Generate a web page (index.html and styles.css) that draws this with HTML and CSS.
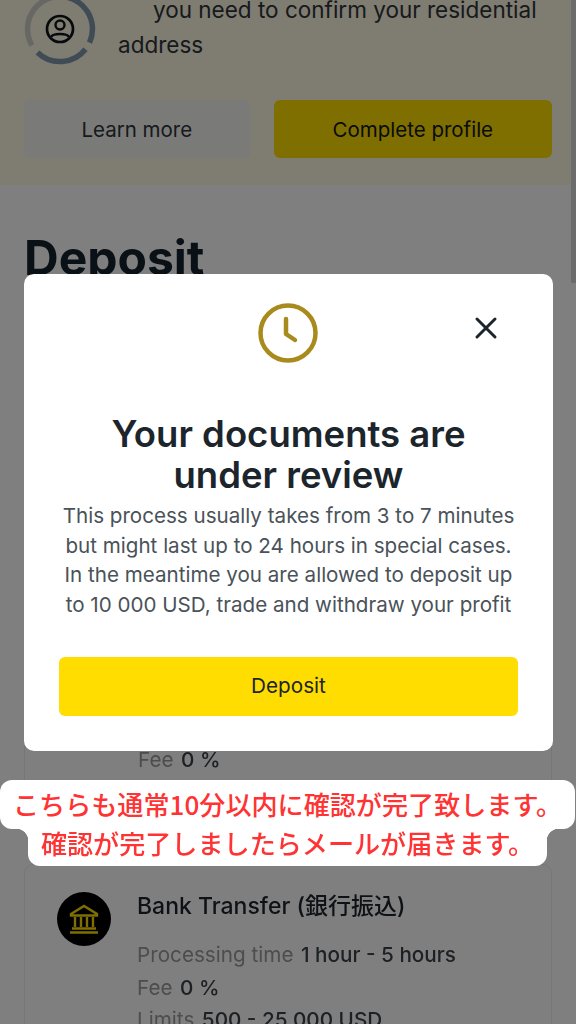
FILE: index.html
```html
<!DOCTYPE html>
<html lang="en">
<head>
  <meta charset="UTF-8">
  <meta name="viewport" content="width=device-width, initial-scale=1.0">
  <title>Deposit</title>
  <link rel="stylesheet" href="styles.css">
</head>
<body>
  <div class="page">
    <section class="notice">
      <div class="notice-row">
        <svg class="ring" width="72" height="72" viewBox="0 0 72 72" fill="none">
          <path d="M36 3.500A32.500 32.500 0 0 0 7.900 52.300" stroke="#cfcfc8" stroke-width="5.500"/>
          <path d="M36 3.500A32.500 32.500 0 0 1 65.500 49.600" stroke="#7f98ac" stroke-width="5.500"/>
          <path d="M13.500 59.500A32.500 32.500 0 0 0 61.500 56.200" stroke="#7f98ac" stroke-width="5.500"/>
          <circle cx="36" cy="36" r="13" stroke="#0c141a" stroke-width="2.700"/>
          <circle cx="36" cy="32" r="4.500" stroke="#0c141a" stroke-width="2.400"/>
          <path d="M27 44c2-4 16-4 18 0" stroke="#0c141a" stroke-width="2.400"/>
        </svg>
        <p class="notice-text">you need to confirm your residential address</p>
      </div>
      <div class="notice-btns">
        <button class="btn btn-grey">Learn more</button>
        <button class="btn btn-yellow">Complete profile</button>
      </div>
    </section>

    <section class="deposit">
      <h1>Deposit</h1>
      <div class="card card-first">
        <div class="card-info">
          <p class="line"><span class="muted">Fee</span> 0 %</p>
        </div>
      </div>
      <div class="card">
        <div class="bank-icon">
          <svg width="32" height="32" viewBox="0 0 32 32" fill="none" stroke="#ffdd00" stroke-width="2.400">
            <path d="M3 11 16 3l13 8v1.500H3z"/>
            <path d="M7 14v10M13 14v10M19 14v10M25 14v10"/>
            <path d="M4 25.500h24M2 29.500h28"/>
          </svg>
        </div>
        <div class="card-info">
          <h2>Bank Transfer (銀行振込)</h2>
          <p class="line"><span class="muted">Processing time</span> 1 hour - 5 hours</p>
          <p class="line"><span class="muted">Fee</span> 0 %</p>
          <p class="line"><span class="muted">Limits</span> 500 - 25 000 USD</p>
        </div>
      </div>
    </section>
  </div>

  <div class="scroll-thumb"></div>
  <div class="overlay"></div>

  <div class="modal">
    <svg class="clock" width="62" height="62" viewBox="0 0 62 62" fill="none" stroke="#a98a1c" stroke-linecap="round">
      <circle cx="31" cy="31" r="27.500" stroke-width="4.500"/>
      <path d="M29 17v15l9 6" stroke-width="4.500" stroke-linejoin="round"/>
    </svg>
    <svg class="close" width="24" height="24" viewBox="0 0 24 24" fill="none" stroke="#1c252c" stroke-width="3" stroke-linecap="round">
      <path d="M3 3l18 18M21 3 3 21"/>
    </svg>
    <h2 class="modal-title">Your documents are under review</h2>
    <p class="modal-text">This process usually takes from 3 to 7 minutes<br>but might last up to 24 hours in special cases.<br>In the meantime you are allowed to deposit up<br>to 10 000 USD, trade and withdraw your profit</p>
    <button class="btn modal-btn">Deposit</button>
  </div>

  <div class="caption">
    <span class="cap-one">こちらも通常10分以内に確認が完了致します。</span>
    <span class="cap-two">確認が完了しましたらメールが届きます。</span>
  </div>
</body>
</html>
```

FILE: styles.css
```css
* {
  box-sizing: border-box;
}
html, body {
  margin: 0;
  height: 1024px;
  overflow: hidden;
}
body {
  background: #fff;
  font-family: Inter, "Noto Sans CJK JP", sans-serif;
  color: #1c252c;
}
p, h1, h2 {
  margin: 0;
}
.page {
  height: 1024px;
  overflow: hidden;
  filter: blur(0.5px);
}

/* top notice */
.notice {
  background: #fff8e2;
  height: 185px;
  padding: 0 24px;
  overflow: hidden;
}
.notice-row {
  display: flex;
  gap: 22px;
  height: 100px;
}
.ring {
  flex: none;
  margin-top: -7px;
}
.notice-text {
  font-size: 22.500px;
  line-height: 35px;
  text-indent: 35px;
  color: #2e353b;
  margin-top: -8px;
}
.notice-btns {
  display: flex;
  gap: 24px;
}
.btn {
  border: 0;
  border-radius: 6px;
  font: 400 20.500px Inter, sans-serif;
  height: 58px;
  color: #1c252c;
}
.btn-grey {
  width: 226px;
  background: #f4f4f1;
  color: #2e353b;
}
.btn-yellow {
  width: 279px;
  background: #ffdd00;
  color: #10181e;
}

/* list behind the modal */
.deposit {
  padding: 43px 24px 0;
}
.deposit h1 {
  font-size: 48px;
  line-height: 60px;
  font-weight: 700;
  color: #13202c;
}
.card {
  display: flex;
  gap: 26px;
  border: 1px solid #ececec;
  border-radius: 10px;
  padding: 27px 32px;
}
.card-first {
  height: 502px;
  margin-top: 10px;
  margin-bottom: 64px;
  align-items: flex-end;
  padding: 0 0 23px 113px;
}
.bank-icon {
  flex: none;
  width: 54px;
  height: 54px;
  border-radius: 50%;
  background: #000;
  display: flex;
  align-items: center;
  justify-content: center;
}
.card-info h2 {
  font-size: 23px;
  font-weight: 500;
  line-height: 28px;
  margin-bottom: 19px;
  color: #1c252c;
}
.line {
  font-size: 20.700px;
  line-height: 32.500px;
  font-weight: 500;
  color: #3b4249;
  white-space: nowrap;
}
.muted {
  color: #9a9a9a;
  font-weight: 400;
  margin-right: 2px;
}

.scroll-thumb {
  position: fixed;
  top: 0;
  right: 0;
  width: 5px;
  height: 283px;
  background: #d8d8d8;
}
.overlay {
  position: fixed;
  inset: 0;
  background: rgba(0, 0, 0, 0.5);
}

/* modal */
.modal {
  position: fixed;
  left: 24px;
  top: 274px;
  width: 529px;
  height: 477px;
  background: #fff;
  border-radius: 10px;
  padding: 140px 35px 0;
  text-align: center;
}
.clock {
  position: absolute;
  left: 233px;
  top: 28px;
}
.close {
  position: absolute;
  left: 450px;
  top: 42px;
}
.modal-title {
  font-size: 36.500px;
  line-height: 41px;
  font-weight: 600;
  color: #1c252c;
}
.modal-text {
  font-size: 20.600px;
  line-height: 29.500px;
  color: #4a5259;
  margin-top: 5px;
  white-space: nowrap;
}
.modal-btn {
  width: 100%;
  height: 59px;
  margin-top: 38px;
  padding-bottom: 3px;
  background: #ffdd00;
  font-size: 20.700px;
}

/* caption on top of everything */
.caption {
  position: fixed;
  left: 0;
  top: 780px;
  width: 576px;
  display: flex;
  flex-direction: column;
  align-items: center;
  font-family: "Noto Sans CJK JP", sans-serif;
  font-weight: 500;
  font-size: 26.100px;
  color: #ff3333;
  white-space: nowrap;
}
.cap-one {
  background: #fff;
  width: 575px;
  margin-right: 1px;
  height: 49px;
  line-height: 49px;
  border-radius: 12px;
  text-align: center;
}
.cap-two {
  position: relative;
  background: #fff;
  width: 519px;
  height: 37px;
  line-height: 28px;
  border-radius: 0 0 12px 12px;
  text-align: center;
  margin-right: 1px;
}
.cap-two::before,
.cap-two::after {
  content: "";
  position: absolute;
  top: 0;
  width: 12px;
  height: 12px;
}
.cap-two::before {
  left: -12px;
  background: radial-gradient(circle at 0 100%, transparent 12px, #fff 12.500px);
}
.cap-two::after {
  right: -12px;
  background: radial-gradient(circle at 100% 100%, transparent 12px, #fff 12.500px);
}
```
